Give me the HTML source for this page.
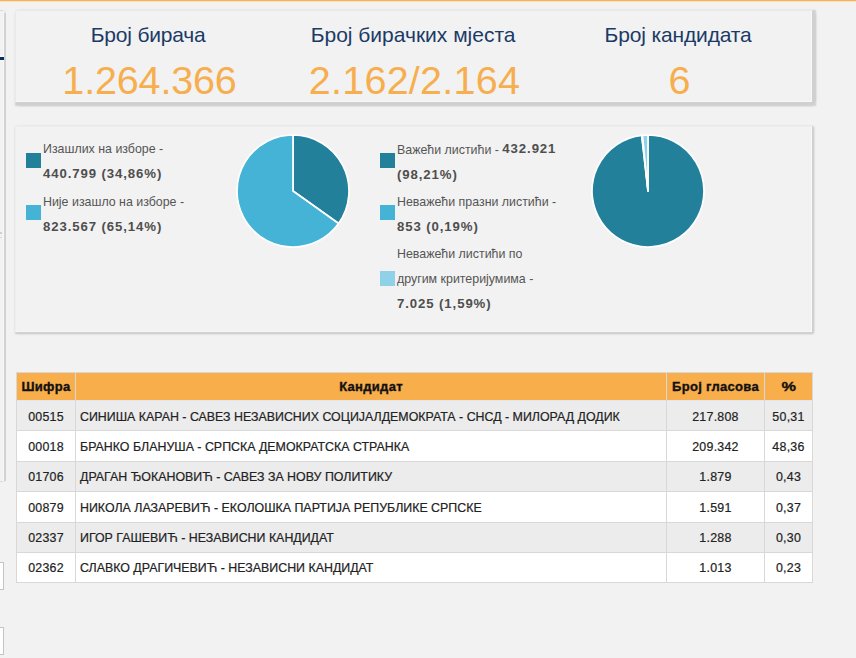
<!DOCTYPE html>
<html><head><meta charset="utf-8">
<style>
html,body{margin:0;padding:0;}
body{width:856px;height:658px;overflow:hidden;background:#f2f2f2;position:relative;font-family:"Liberation Sans",sans-serif;}
.abs{position:absolute;}
#topline{left:0;top:0;width:856px;height:1px;background:#fbb24e;}
#topline2{left:0;top:1px;width:856px;height:1px;background:#f5e0c2;}
#topline3{left:0;top:2px;width:856px;height:1px;background:#f1f3f7;}
#leftpanel{left:-10px;top:10px;width:13px;height:470px;border:1px solid #dcdcdc;border-left:none;border-right:1px solid #f7f7f7;box-shadow:1.5px 0 0.8px #d2d2d2;}
#bluemark{left:0;top:57px;width:4px;height:3px;background:#0c2d61;box-shadow:0 -2px 0 #fbfbfb, 0 2px 0 #f8f6f2;}
.inp{left:-10px;width:12px;height:26px;background:#fff;border:1px solid #c4c4c4;}
#stats{left:15px;top:10px;width:795px;height:90px;border:1px solid #e9e9e9;border-right-color:#f8f8f8;border-bottom-color:#f8f8f8;background:#f2f2f2;box-shadow:4px 0 1.5px #d0d0d0, 0 4px 1.5px #d0d0d0, 4px 4px 1.5px #d0d0d0;}
.st{position:absolute;top:0;width:265px;text-align:center;}
.st .t{position:absolute;left:-1.4px;right:1.4px;top:11.6px;font-size:21px;color:#1b3b66;line-height:24px;white-space:nowrap;}
.st .n{position:absolute;left:0;right:0;top:47px;font-size:39.5px;color:#f6ae4e;line-height:44px;white-space:nowrap;}
#charts{left:15px;top:126px;width:795px;height:204px;border:1px solid #ededed;border-right-color:#f8f8f8;border-bottom-color:#f8f8f8;background:#f2f2f2;box-shadow:2px 0 1.5px #d0d0d0, 0 2px 1.5px #d0d0d0, 2px 2px 1.5px #d0d0d0;}
.lg{position:absolute;font-size:12.4px;color:#555;line-height:25px;white-space:nowrap;}
.lg b{color:#4e4e4e;letter-spacing:0.9px;font-size:13.2px;position:relative;top:-1px;}
.sq{position:absolute;width:15px;height:15px;}
.th{position:absolute;height:27px;line-height:27px;text-align:center;font-weight:bold;font-size:13px;color:#111;letter-spacing:0.3px;white-space:nowrap;-webkit-text-stroke:0.35px #111;}
.td{position:absolute;height:29px;line-height:29px;font-size:12.4px;color:#222;white-space:nowrap;-webkit-text-stroke:0.2px #222;}
.td.c{text-align:center;letter-spacing:0.25px;}
</style></head>
<body>
<div id="topline" class="abs"></div><div id="topline2" class="abs"></div><div id="topline3" class="abs"></div>
<div id="leftpanel" class="abs"></div>
<div id="bluemark" class="abs"></div>
<div class="abs" style="left:0;top:232px;width:2px;height:2px;background:#cfcfcf"></div>
<div class="abs" style="left:0;top:237px;width:2px;height:1px;background:#d8d8d8"></div>
<div class="abs inp" style="top:562px"></div>
<div class="abs inp" style="top:627px"></div>

<div id="stats" class="abs">
  <div class="st" style="left:1px"><div class="t" style="letter-spacing:-0.2px">Број бирача</div><div class="n" style="letter-spacing:-0.15px">1.264.366</div></div>
  <div class="st" style="left:266px"><div class="t" style="letter-spacing:0px">Број бирачких мјеста</div><div class="n" style="letter-spacing:0.27px">2.162/2.164</div></div>
  <div class="st" style="left:531px"><div class="t" style="letter-spacing:-0.15px">Број кандидата</div><div class="n">6</div></div>
</div>

<div id="charts" class="abs">
  <div class="sq" style="left:10px;top:26px;background:#23809b"></div>
  <div class="lg" style="left:27px;top:10px">Изашлих на изборе -<br><b>440.799 (34,86%)</b></div>
  <div class="sq" style="left:10px;top:78px;background:#45b3d6"></div>
  <div class="lg" style="left:27px;top:63px">Није изашло на изборе -<br><b>823.567 (65,14%)</b></div>
  <svg class="abs" style="left:220.05px;top:7.3px" width="114" height="114" viewBox="0 0 114 114"><path d="M57,57 L57.00,1.00 A56,56 0 0 1 102.59,89.52 Z" fill="#23809b" stroke="#fff" stroke-width="1.7" stroke-linejoin="round"/>
<path d="M57,57 L102.59,89.52 A56,56 0 1 1 57.00,1.00 Z" fill="#45b3d6" stroke="#fff" stroke-width="1.7" stroke-linejoin="round"/></svg>
  <div class="sq" style="left:364px;top:26px;background:#23809b"></div>
  <div class="lg" style="left:381px;top:10px">Важећи листићи - <b>432.921</b><br><b>(98,21%)</b></div>
  <div class="sq" style="left:364px;top:78px;background:#45b3d6"></div>
  <div class="lg" style="left:381px;top:63px">Неважећи празни листићи -<br><b>853 (0,19%)</b></div>
  <div class="sq" style="left:364px;top:144px;background:#8fd2e7"></div>
  <div class="lg" style="left:381px;top:115px">Неважећи листићи по<br>другим критеријумима -<br><b>7.025 (1,59%)</b></div>
  <svg class="abs" style="left:575px;top:7.4px" width="114" height="114" viewBox="0 0 114 114"><path d="M57,57 L57.00,1.00 A56,56 0 1 1 50.75,1.35 Z" fill="#23809b" stroke="#fff" stroke-width="1.7" stroke-linejoin="round"/>
<path d="M57,57 L50.75,1.35 A56,56 0 0 1 51.41,1.28 Z" fill="#45b3d6" stroke="#fff" stroke-width="1.7" stroke-linejoin="round"/>
<path d="M57,57 L51.41,1.28 A56,56 0 0 1 57.00,1.00 Z" fill="#8fd2e7" stroke="#fff" stroke-width="1.7" stroke-linejoin="round"/></svg>
</div>

<div id="tbl" class="abs">
<div class="abs" style="left:17px;top:373px;width:795px;height:27px;background:#f8ae4b"></div>
<div class="abs" style="left:17px;top:401px;width:795px;height:29px;background:#ececec"></div>
<div class="abs" style="left:17px;top:431px;width:795px;height:30px;background:#ffffff"></div>
<div class="abs" style="left:17px;top:462px;width:795px;height:29px;background:#ececec"></div>
<div class="abs" style="left:17px;top:492px;width:795px;height:30px;background:#ffffff"></div>
<div class="abs" style="left:17px;top:523px;width:795px;height:29px;background:#ececec"></div>
<div class="abs" style="left:17px;top:553px;width:795px;height:29px;background:#ffffff"></div>
<div class="abs" style="left:16px;top:372px;width:797px;height:1px;background:#d8d8d8"></div>
<div class="abs" style="left:16px;top:400px;width:797px;height:1px;background:#e2e5ec"></div>
<div class="abs" style="left:16px;top:430px;width:797px;height:1px;background:#d8d8d8"></div>
<div class="abs" style="left:16px;top:461px;width:797px;height:1px;background:#d8d8d8"></div>
<div class="abs" style="left:16px;top:491px;width:797px;height:1px;background:#d8d8d8"></div>
<div class="abs" style="left:16px;top:522px;width:797px;height:1px;background:#d8d8d8"></div>
<div class="abs" style="left:16px;top:552px;width:797px;height:1px;background:#d8d8d8"></div>
<div class="abs" style="left:16px;top:582px;width:797px;height:1px;background:#d8d8d8"></div>
<div class="abs" style="left:16px;top:372px;width:1px;height:211px;background:#d8d8d8"></div>
<div class="abs" style="left:75px;top:372px;width:1px;height:211px;background:#d8d8d8"></div>
<div class="abs" style="left:666px;top:372px;width:1px;height:211px;background:#d8d8d8"></div>
<div class="abs" style="left:764px;top:372px;width:1px;height:211px;background:#d8d8d8"></div>
<div class="abs" style="left:812px;top:372px;width:1px;height:211px;background:#d8d8d8"></div>
<div class="th" style="left:17px;width:58px;top:373px">Шифра</div>
<div class="th" style="left:76px;width:590px;top:373px">Кандидат</div>
<div class="th" style="left:667px;width:97px;top:373px">Број гласова</div>
<div class="th" style="left:765px;width:47px;top:373px"><span style="display:inline-block;transform:scaleX(1.25);transform-origin:center">%</span></div>
<div class="td c" style="left:17px;width:58px;top:403px">00515</div>
<div class="td l" style="left:80px;top:403px">СИНИША КАРАН - САВЕЗ НЕЗАВИСНИХ СОЦИЈАЛДЕМОКРАТА - СНСД - МИЛОРАД ДОДИК</div>
<div class="td c" style="left:667px;width:97px;top:403px">217.808</div>
<div class="td c" style="left:765px;width:47px;top:403px">50,31</div>
<div class="td c" style="left:17px;width:58px;top:433px">00018</div>
<div class="td l" style="left:80px;top:433px">БРАНКО БЛАНУША - СРПСКА ДЕМОКРАТСКА СТРАНКА</div>
<div class="td c" style="left:667px;width:97px;top:433px">209.342</div>
<div class="td c" style="left:765px;width:47px;top:433px">48,36</div>
<div class="td c" style="left:17px;width:58px;top:463px">01706</div>
<div class="td l" style="left:80px;top:463px">ДРАГАН ЂОКАНОВИЋ - САВЕЗ ЗА НОВУ ПОЛИТИКУ</div>
<div class="td c" style="left:667px;width:97px;top:463px">1.879</div>
<div class="td c" style="left:765px;width:47px;top:463px">0,43</div>
<div class="td c" style="left:17px;width:58px;top:494px">00879</div>
<div class="td l" style="left:80px;top:494px">НИКОЛА ЛАЗАРЕВИЋ - ЕКОЛОШКА ПАРТИЈА РЕПУБЛИКЕ СРПСКЕ</div>
<div class="td c" style="left:667px;width:97px;top:494px">1.591</div>
<div class="td c" style="left:765px;width:47px;top:494px">0,37</div>
<div class="td c" style="left:17px;width:58px;top:524px">02337</div>
<div class="td l" style="left:80px;top:524px">ИГОР ГАШЕВИЋ - НЕЗАВИСНИ КАНДИДАТ</div>
<div class="td c" style="left:667px;width:97px;top:524px">1.288</div>
<div class="td c" style="left:765px;width:47px;top:524px">0,30</div>
<div class="td c" style="left:17px;width:58px;top:554px">02362</div>
<div class="td l" style="left:80px;top:554px">СЛАВКО ДРАГИЧЕВИЋ - НЕЗАВИСНИ КАНДИДАТ</div>
<div class="td c" style="left:667px;width:97px;top:554px">1.013</div>
<div class="td c" style="left:765px;width:47px;top:554px">0,23</div>
</div>
</body></html>
